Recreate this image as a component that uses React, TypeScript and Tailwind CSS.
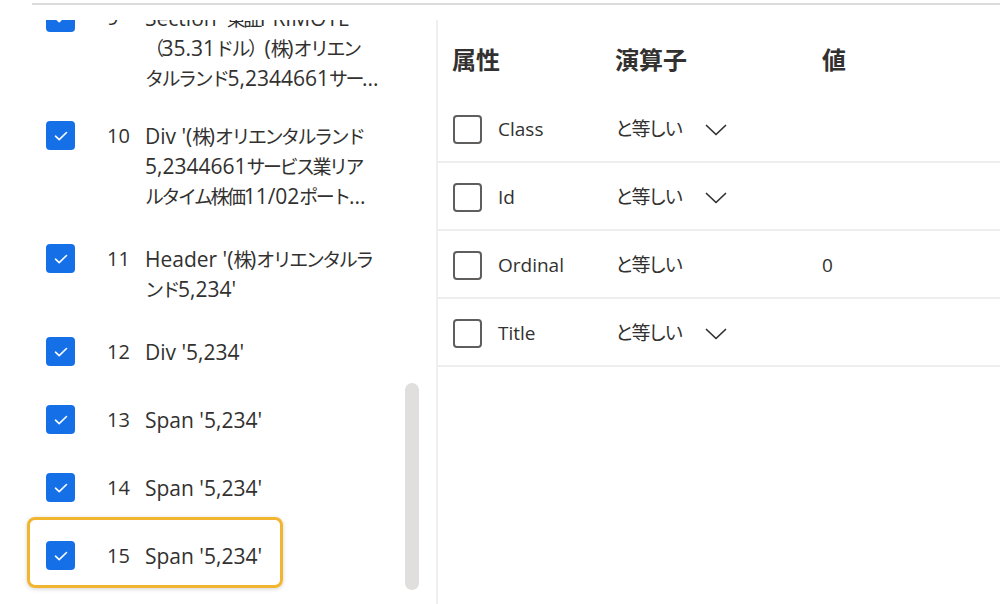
import React from 'react';

const font = "font-['Open_Sans','Noto_Sans_CJK_JP',sans-serif]";

type Item = { no: number; lines: string[]; pad: string; box?: boolean };

const items: Item[] = [
    { no: 9, lines: ["Section '東証PRIMOTE", '（35.31ドル）(株)オリエン', 'タルランド5,2344661サー...'], pad: 'pt-[17px] pb-[11px]' },
    { no: 10, lines: ["Div '(株)オリエンタルランド", '5,2344661サービス業リア', 'ルタイム株価11/02ポート...'], pad: 'pt-[17px] pb-[16px]' },
    { no: 11, lines: ["Header '(株)オリエンタルラ", "ンド5,234'"], pad: 'pt-[17px] pb-[16px]' },
    { no: 12, lines: ["Div '5,234'"], pad: 'pt-[17px] pb-[16px]' },
    { no: 13, lines: ["Span '5,234'"], pad: 'pt-[17px] pb-[16px]' },
    { no: 14, lines: ["Span '5,234'"], pad: 'pt-[17px] pb-[16px]' },
    { no: 15, lines: ["Span '5,234'"], pad: 'pt-[17px] pb-[16px]', box: true },
];

const attrs = [
    { name: 'Class', drop: true, value: '' },
    { name: 'Id', drop: true, value: '' },
    { name: 'Ordinal', drop: false, value: '0' },
    { name: 'Title', drop: true, value: '' },
];

// japanese runs are set a bit tighter so widths match the UI font
const Mixed = ({ text }: { text: string }) => (
    <>
        {text.split(/([\u3000-\u30ff\u4e00-\u9fff\uff00-\uffef]+)/).map((part, i) =>
            i % 2 === 1 ? (
                <span key={i} className="text-[19px] tracking-[-2.5px]">{part}</span>
            ) : (
                <span key={i}>{part}</span>
            )
        )}
    </>
);

const Checked = () => (
    <div className="w-[29px] h-[29px] rounded-[4px] bg-[#1570e8] flex items-center justify-center">
        <svg width="14" height="10" viewBox="0 0 14 10" fill="none">
            <path d="M1.5 5.2 L5.2 8.6 L12.5 1.5" stroke="white" strokeWidth="1.6" strokeLinecap="round" strokeLinejoin="round" />
        </svg>
    </div>
);

const Chevron = () => (
    <svg width="22" height="12" viewBox="0 0 22 12" fill="none">
        <path d="M1.5 1.5 L11 10.5 L20.5 1.5" stroke="#323130" strokeWidth="1.7" strokeLinecap="round" strokeLinejoin="round" />
    </svg>
);

const App = () => {
    return (
        <div className={`w-[1000px] h-[604px] bg-white overflow-hidden text-[#323130] ${font}`}>
            <div className="h-[20px] pt-[3px] pl-[32px]">
                <div className="h-[2px] bg-[#dcdcdc]" />
            </div>
            <div className="flex h-[584px]">
                {/* left: element list */}
                <div className="relative w-[436px] overflow-hidden">
                    <div className="mt-[-34px]">
                        {items.map((it) => (
                            <div key={it.no} className={`relative flex items-start pl-[46px] ${it.pad}`}>
                                {it.box && (
                                    <div className="absolute left-[27px] top-[-7px] w-[256px] h-[71px] rounded-[8px] border-[3px] border-[#f2b530] shadow-[0_1px_4px_rgba(0,0,0,0.18)]" />
                                )}
                                <div className="h-[35px] w-[61px] shrink-0">
                                    <Checked />
                                </div>
                                <div className="w-[38px] shrink-0 text-[20px] leading-[30px]">{it.no}</div>
                                <div className="text-[21px] leading-[30px] whitespace-nowrap">
                                    {it.lines.map((l, i) => (
                                        <div key={i} className="h-[30px]">
                                            <Mixed text={l} />
                                        </div>
                                    ))}
                                </div>
                            </div>
                        ))}
                    </div>
                    {/* scrollbar thumb */}
                    <div className="absolute left-[405px] top-[363px] w-[14px] h-[207px] rounded-full bg-[#e1dfdd]" />
                </div>

                {/* right: attribute table */}
                <div className="flex-1 border-l-2 border-[#efefef]">
                    <div className="h-[75px] pt-[5px] pl-[14px] flex items-center text-[24px] font-semibold">
                        <div className="w-[163px]">属性</div>
                        <div className="w-[207px]">演算子</div>
                        <div>値</div>
                    </div>
                    {attrs.map((a) => (
                        <div key={a.name} className="h-[68px] pt-[3px] pl-[15px] flex items-center border-b-2 border-[#eeeeee] text-[19px]">
                            <div className="w-[162px] flex items-center">
                                <div className="w-[29px] h-[29px] rounded-[4px] border-2 border-[#5f5e5c]" />
                                <span className="ml-[16px]">{a.name}</span>
                            </div>
                            <div className="w-[207px] flex items-center">
                                <span className="w-[90px] tracking-[-2.5px]">と等しい</span>
                                {a.drop && <Chevron />}
                            </div>
                            <div>{a.value}</div>
                        </div>
                    ))}
                </div>
            </div>
        </div>
    );
};

export default App;
